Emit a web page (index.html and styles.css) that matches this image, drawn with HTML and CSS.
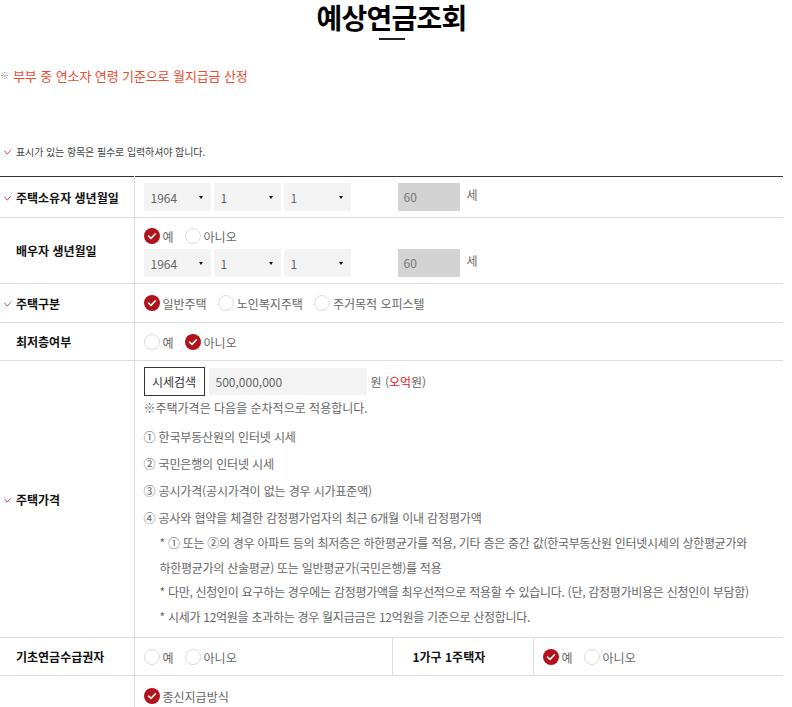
FILE: index.html
```html
<!DOCTYPE html>
<html lang="ko">
<head>
<meta charset="utf-8">
<title>예상연금조회</title>
<link rel="stylesheet" href="styles.css">
</head>
<body>
<div class="page">
  <h1 class="title">예상연금조회</h1>
  <div class="title-bar"></div>
  <p class="notice"><span class="kome">※</span><span class="notice-text">부부 중 연소자 연령 기준으로 월지급금 산정</span></p>
  <p class="required"><span class="mark"><svg width="7" height="5" viewBox="0 0 7 5"><polyline points="0.4,0.8 3.2,4.2 6.6,0.4" fill="none" stroke="#c8323c" stroke-width="0.9"/></svg></span>표시가 있는 항목은 필수로 입력하셔야 합니다.</p>

  <table class="form">
    <colgroup><col class="c1"><col class="c2"><col class="c3"><col class="c4"></colgroup>
    <tr>
      <th><span class="mark"><svg width="7" height="5" viewBox="0 0 7 5"><polyline points="0.4,0.8 3.2,4.2 6.6,0.4" fill="none" stroke="#c8323c" stroke-width="0.9"/></svg></span>주택소유자 생년월일</th>
      <td colspan="3" class="row1">
        <div class="date-row">
          <div class="select"><span>1964</span><i class="arrow"></i></div>
          <div class="select"><span>1</span><i class="arrow"></i></div>
          <div class="select"><span>1</span><i class="arrow"></i></div>
          <div class="age">60</div>
          <span class="unit">세</span>
        </div>
      </td>
    </tr>
    <tr>
      <th><span class="mark"></span>배우자 생년월일</th>
      <td colspan="3" class="row2">
        <div class="radios">
          <span class="opt"><span class="circle on"><svg width="16" height="16" viewBox="0 0 16 16"><polyline points="4.6,8.2 7,10.4 11.4,5.8" fill="none" stroke="#fff" stroke-width="1.6" stroke-linecap="round" stroke-linejoin="round"/></svg></span>예</span>
          <span class="opt"><span class="circle"></span>아니오</span>
        </div>
        <div class="date-row spaced">
          <div class="select"><span>1964</span><i class="arrow"></i></div>
          <div class="select"><span>1</span><i class="arrow"></i></div>
          <div class="select"><span>1</span><i class="arrow"></i></div>
          <div class="age">60</div>
          <span class="unit">세</span>
        </div>
      </td>
    </tr>
    <tr>
      <th><span class="mark"><svg width="7" height="5" viewBox="0 0 7 5"><polyline points="0.4,0.8 3.2,4.2 6.6,0.4" fill="none" stroke="#c8323c" stroke-width="0.9"/></svg></span>주택구분</th>
      <td colspan="3" class="row3">
        <div class="radios">
          <span class="opt"><span class="circle on"><svg width="16" height="16" viewBox="0 0 16 16"><polyline points="4.6,8.2 7,10.4 11.4,5.8" fill="none" stroke="#fff" stroke-width="1.6" stroke-linecap="round" stroke-linejoin="round"/></svg></span>일반주택</span>
          <span class="opt"><span class="circle"></span>노인복지주택</span>
          <span class="opt"><span class="circle"></span>주거목적 오피스텔</span>
        </div>
      </td>
    </tr>
    <tr>
      <th><span class="mark"></span>최저층여부</th>
      <td colspan="3" class="row4">
        <div class="radios">
          <span class="opt"><span class="circle"></span>예</span>
          <span class="opt"><span class="circle on"><svg width="16" height="16" viewBox="0 0 16 16"><polyline points="4.6,8.2 7,10.4 11.4,5.8" fill="none" stroke="#fff" stroke-width="1.6" stroke-linecap="round" stroke-linejoin="round"/></svg></span>아니오</span>
        </div>
      </td>
    </tr>
    <tr>
      <th><span class="mark"><svg width="7" height="5" viewBox="0 0 7 5"><polyline points="0.4,0.8 3.2,4.2 6.6,0.4" fill="none" stroke="#c8323c" stroke-width="0.9"/></svg></span>주택가격</th>
      <td colspan="3" class="row5">
        <div class="price-row">
          <span class="btn">시세검색</span>
          <span class="price">500,000,000</span>
          <span class="won">원 (<em>오억</em>원)</span>
        </div>
        <p class="price-note">※주택가격은 다음을 순차적으로 적용합니다.</p>
        <ul class="steps">
          <li>① 한국부동산원의 인터넷 시세</li>
          <li>② 국민은행의 인터넷 시세</li>
          <li>③ 공시가격(공시가격이 없는 경우 시가표준액)</li>
          <li>④ 공사와 협약을 체결한 감정평가업자의 최근 6개월 이내 감정평가액</li>
        </ul>
        <div class="stars">
          <p>* ① 또는 ②의 경우 아파트 등의 최저층은 하한평균가를 적용, 기타 층은 중간 값(한국부동산원 인터넷시세의 상한평균가와</p>
          <p>하한평균가의 산술평균) 또는 일반평균가(국민은행)를 적용</p>
          <p>* 다만, 신청인이 요구하는 경우에는 감정평가액을 최우선적으로 적용할 수 있습니다. (단, 감정평가비용은 신청인이 부담함)</p>
          <p>* 시세가 12억원을 초과하는 경우 월지급금은 12억원을 기준으로 산정합니다.</p>
        </div>
      </td>
    </tr>
    <tr>
      <th><span class="mark"></span>기초연금수급권자</th>
      <td class="row6 split">
        <div class="radios">
          <span class="opt"><span class="circle"></span>예</span>
          <span class="opt"><span class="circle"></span>아니오</span>
        </div>
      </td>
      <th class="th2 split">1가구 1주택자</th>
      <td class="row6">
        <div class="radios">
          <span class="opt"><span class="circle on"><svg width="16" height="16" viewBox="0 0 16 16"><polyline points="4.6,8.2 7,10.4 11.4,5.8" fill="none" stroke="#fff" stroke-width="1.6" stroke-linecap="round" stroke-linejoin="round"/></svg></span>예</span>
          <span class="opt"><span class="circle"></span>아니오</span>
        </div>
      </td>
    </tr>
    <tr>
      <th><span class="mark"></span></th>
      <td colspan="3" class="row7">
        <div class="radios">
          <span class="opt"><span class="circle on"><svg width="16" height="16" viewBox="0 0 16 16"><polyline points="4.6,8.2 7,10.4 11.4,5.8" fill="none" stroke="#fff" stroke-width="1.6" stroke-linecap="round" stroke-linejoin="round"/></svg></span>종신지급방식</span>
        </div>
      </td>
    </tr>
  </table>
</div>
</body>
</html>
```

FILE: styles.css
```css
html, body {
  margin: 0;
  padding: 0;
  background: #fff;
}

body {
  font-family: "Noto Sans CJK KR", "Noto Sans", sans-serif;
  color: #666;
  font-size: 12px;
  letter-spacing: 0;
}

.page {
  width: 783px;
}

.title {
  margin: 0;
  text-align: center;
  font-size: 28px;
  line-height: 34px;
  font-weight: 700;
  letter-spacing: -0.8px;
  color: #000;
}

.title-bar {
  width: 26px;
  height: 2px;
  margin: 4px auto 0;
  background: #222;
}

.notice {
  margin: 24px 0 0;
  line-height: 24px;
  display: flex;
  align-items: center;
}

.kome {
  font-size: 9px;
  color: #888;
  width: 13px;
}

.notice-text {
  font-size: 13px;
  letter-spacing: -0.1px;
  color: #ef4b2f;
}

.required {
  margin: 56px 0 0;
  padding-left: 4px;
  line-height: 16px;
  font-size: 10px;
  letter-spacing: -0.1px;
  color: #444;
  display: flex;
  align-items: center;
}

.mark {
  display: inline-flex;
  align-items: center;
  width: 12px;
  height: 10px;
  vertical-align: middle;
}

.mark svg {
  display: block;
}

.form {
  margin-top: 16px;
  width: 783px;
  border-collapse: collapse;
  table-layout: fixed;
  border-top: 1px solid #333;
}

.c1 { width: 134px; }
.c2 { width: 258px; }
.c3 { width: 141px; }
.c4 { width: 250px; }

.form th {
  text-align: left;
  vertical-align: middle;
  padding: 0 0 0 4px;
  font-weight: 700;
  color: #111;
  font-size: 12px;
  border-right: 1px solid #ddd;
  border-bottom: 1px solid #ddd;
  white-space: nowrap;
}

.form th .mark {
  margin-top: -2px;
}

.form td {
  padding: 6px 0 6px 9px;
  border-bottom: 1px solid #ddd;
  vertical-align: top;
}

.form .th2 {
  padding-left: 20px;
}

.form td.split {
  border-right: 1px solid #ddd;
}

.form td.row3 { padding-top: 7px; padding-bottom: 7px; }
.form td.row4 { padding-top: 7px; padding-bottom: 6px; }
.form td.row5 { padding-top: 6px; padding-bottom: 8px; }
.form td.row6 { padding-top: 7px; padding-bottom: 6px; vertical-align: middle; }
.form td.row7 { padding-top: 8px; padding-bottom: 24px; }

.date-row {
  display: flex;
  align-items: flex-start;
  gap: 3px;
}

.date-row.spaced {
  margin-top: 1px;
}

.select {
  box-sizing: border-box;
  width: 67px;
  height: 28px;
  background: #f3f3f3;
  padding: 0 8px 0 7px;
  display: flex;
  align-items: center;
  justify-content: space-between;
  color: #666;
}

.arrow {
  width: 0;
  height: 0;
  border-left: 2.5px solid transparent;
  border-right: 2.5px solid transparent;
  border-top: 3.5px solid #111;
}

.age {
  box-sizing: border-box;
  width: 62px;
  height: 28px;
  margin-left: 44px;
  background: #d3d3d3;
  padding-left: 6px;
  line-height: 28px;
  color: #777;
}

.unit {
  margin-left: 4px;
  line-height: 24px;
  color: #666;
}

.radios {
  display: flex;
  align-items: center;
  height: 24px;
}

.opt {
  display: inline-flex;
  align-items: center;
  margin-right: 11px;
  color: #666;
  white-space: nowrap;
}

.circle {
  box-sizing: border-box;
  width: 16px;
  height: 16px;
  border-radius: 50%;
  border: 1px solid #dcdcdc;
  background: #fff;
  margin-right: 3px;
  display: inline-block;
}

.circle.on {
  border: none;
  background: #b1121c;
}

.circle svg {
  display: block;
}

.price-row {
  display: flex;
  align-items: center;
}

.btn {
  box-sizing: border-box;
  width: 61px;
  height: 29px;
  border: 1px solid #333;
  display: flex;
  align-items: center;
  justify-content: center;
  color: #333;
  background: #fff;
}

.price {
  box-sizing: border-box;
  width: 158px;
  height: 27px;
  margin-left: 4px;
  background: #f3f3f3;
  padding-left: 7px;
  line-height: 27px;
  color: #666;
}

.won {
  margin-left: 4px;
  color: #666;
}

.won em {
  font-style: normal;
  color: #e8141c;
}

.price-note {
  margin: 0 0 3px;
  line-height: 24px;
}

.steps {
  list-style: none;
  margin: 0;
  padding: 0;
  letter-spacing: -0.15px;
}

.steps li {
  line-height: 27px;
}

.stars {
  letter-spacing: -0.28px;
}

.stars p {
  margin: 0;
  padding-left: 16px;
  line-height: 24.5px;
  white-space: nowrap;
}
```
